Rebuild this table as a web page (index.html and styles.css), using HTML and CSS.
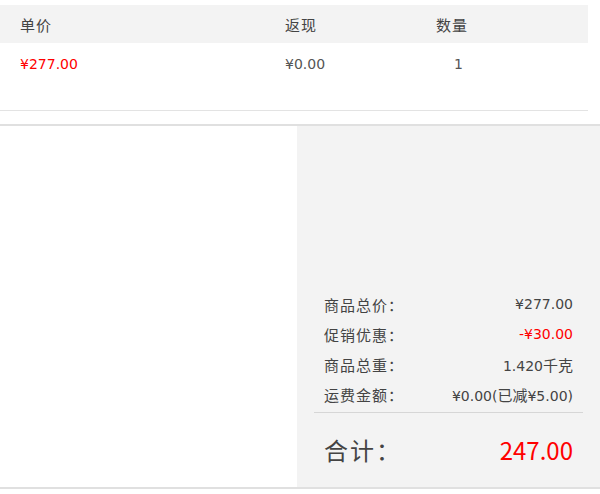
FILE: index.html
```html
<!DOCTYPE html>
<html lang="zh-CN">
<head>
<meta charset="utf-8">
<title>订单</title>
<link rel="stylesheet" href="styles.css">
</head>
<body>
<div class="cart">
  <div class="thead">
    <div class="col col-price cjk">单价</div>
    <div class="col col-rebate cjk">返现</div>
    <div class="col col-qty cjk">数量</div>
  </div>
  <div class="trow">
    <div class="col col-price red">¥277.00</div>
    <div class="col col-rebate">¥0.00</div>
    <div class="col col-qty qty">1</div>
  </div>
</div>
<div class="summary">
  <div class="summary-blank"></div>
  <div class="summary-panel">
    <div class="line"><span class="label cjk">商品总价：</span><span class="value">¥277.00</span></div>
    <div class="line"><span class="label cjk">促销优惠：</span><span class="value red">-¥30.00</span></div>
    <div class="line"><span class="label cjk">商品总重：</span><span class="value">1.420<span class="cjk-in">千克</span></span></div>
    <div class="line"><span class="label cjk">运费金额：</span><span class="value">¥0.00(<span class="cjk-in">已减</span>¥5.00)</span></div>
    <div class="divider"></div>
    <div class="total"><span class="total-label">合计：</span><span class="total-value">247.00</span></div>
  </div>
</div>
</body>
</html>
```
FILE: styles.css
```css
html, body {
  margin: 0;
  padding: 0;
  background: #fff;
}
body {
  font-family: "DejaVu Sans", "Noto Sans CJK SC", sans-serif;
  font-size: 14px;
  color: #555;
}
.cjk {
  font-size: 15px;
  letter-spacing: 1px;
}
.cjk-in {
  font-size: 15px;
}
.cart {
  width: 588px;
  padding-top: 5px;
}
.thead {
  display: flex;
  height: 38px;
  align-items: center;
  background: #f3f3f3;
  color: #444;
}
.trow {
  display: flex;
  height: 67px;
  align-items: flex-start;
  border-bottom: 1px solid #e3e3e3;
}
.trow .col {
  line-height: 42px;
}
.col-price {
  width: 265px;
  padding-left: 20px;
}
.col-rebate {
  width: 151px;
}
.col-qty {
  width: 60px;
}
.qty {
  padding-left: 18px;
}
.red {
  color: #f00;
}
.summary {
  margin-top: 13px;
  display: flex;
  border-top: 2px solid #e0e0e0;
  border-bottom: 2px solid #e0e0e0;
  height: 361px;
}
.summary-blank {
  width: 297px;
}
.summary-panel {
  flex: 1;
  background: #f3f3f3;
  display: flex;
  flex-direction: column;
  justify-content: flex-end;
}
.line {
  display: flex;
  justify-content: space-between;
  align-items: center;
  height: 30px;
  padding: 0 27px;
  color: #444;
}
.divider {
  margin: 3px 17px 0;
  border-top: 1px solid #d6d6d6;
}
.total {
  display: flex;
  justify-content: space-between;
  align-items: center;
  height: 72px;
  padding: 0 27px 2px 27px;
  font-family: "Noto Sans CJK SC", sans-serif;
}
.total-label {
  font-size: 24px;
  color: #444;
  letter-spacing: 2px;
}
.total-value {
  font-size: 24px;
  color: #f00;
}
```
